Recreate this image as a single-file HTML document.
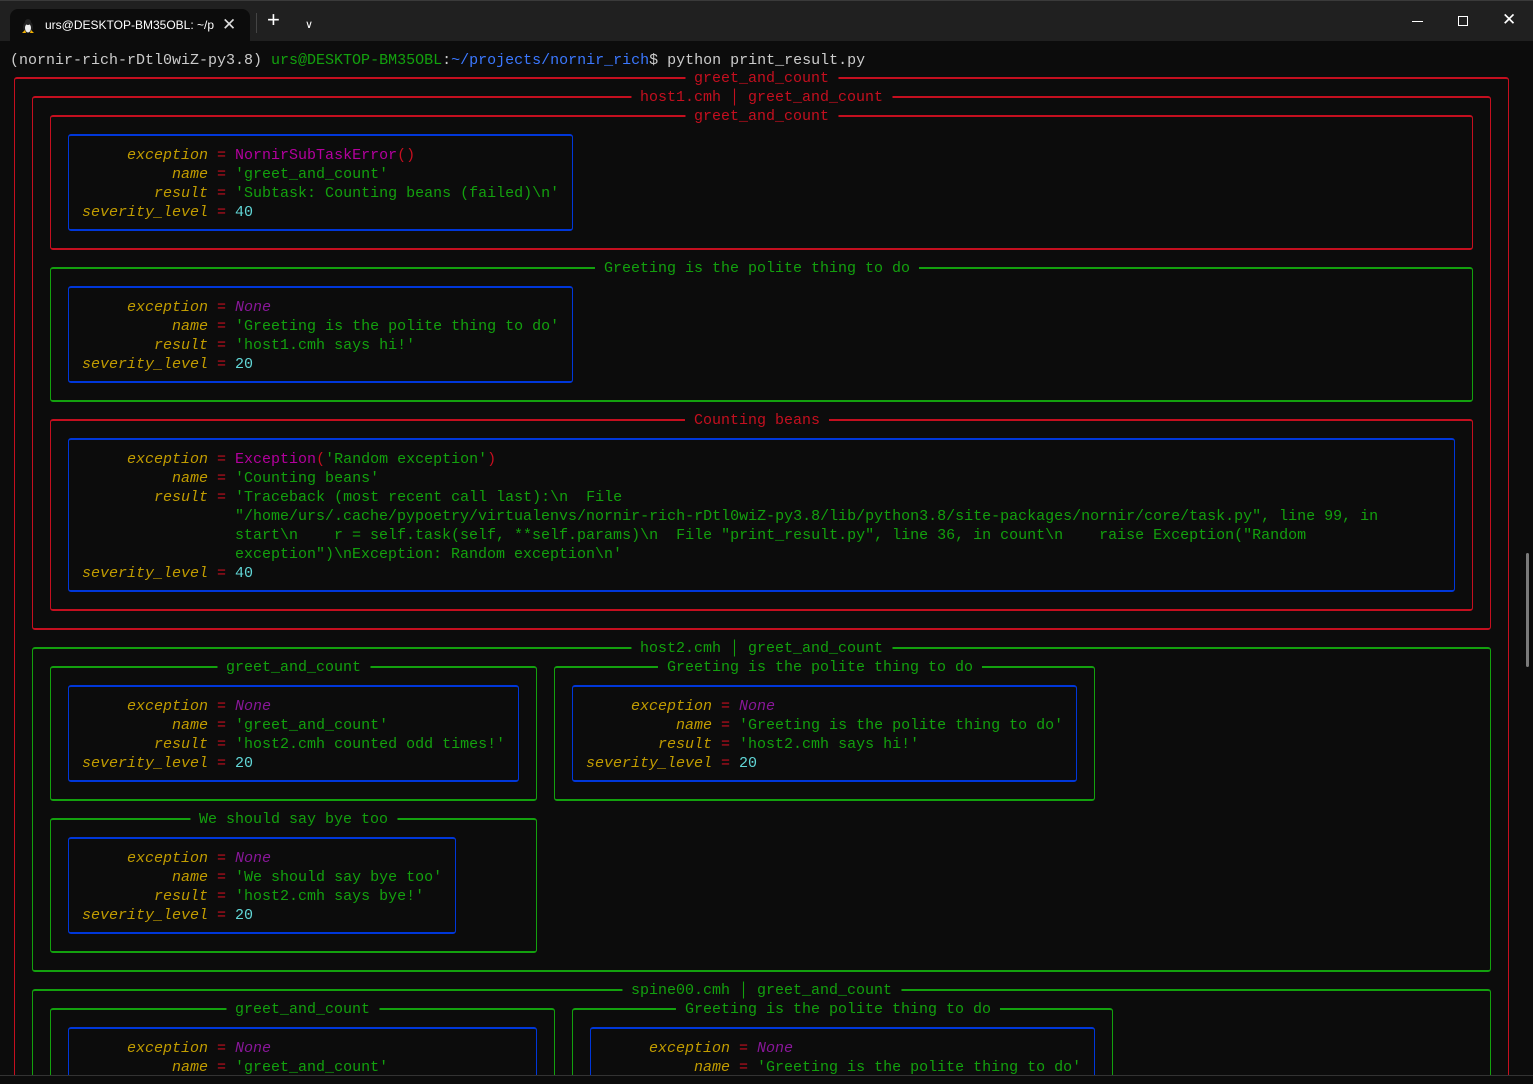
<!DOCTYPE html>
<html><head><meta charset="utf-8"><style>
*{margin:0;padding:0;box-sizing:border-box}
html,body{width:1533px;height:1084px;overflow:hidden;background:#0c0c0c}
body{position:relative;font-family:"Liberation Mono",monospace;font-size:15px;line-height:19px;color:#cccccc}
#tb{position:absolute;left:0;top:0;width:1533px;height:41px;background:#202020;border-top:1px solid #3a3a3a}
#tab{position:absolute;left:10px;top:8px;width:240px;height:33px;background:#0c0c0c;border-radius:8px 8px 0 0}
#tab .t{position:absolute;left:35px;top:9px;font:12px "Liberation Sans",sans-serif;color:#fff}
#tab .x{position:absolute;left:212px;top:6px;font:17px "Liberation Sans",sans-serif;color:#ddd}
.w{position:absolute;color:#fff;font-family:"Liberation Sans",sans-serif}
#term{position:absolute;left:0;top:41px;width:1533px;height:1034px;overflow:hidden}
#area{position:absolute;left:0;top:-40px;width:1533px;height:1075px;overflow:hidden}
.l{position:absolute;white-space:pre}
.b{position:absolute;border-style:solid;border-width:2px 1px;border-radius:3px}
.r{border-color:#c50f1f;color:#c50f1f}
.g{border-color:#13a10e;color:#13a10e}
.u{border-color:#0037da}
.tt{position:absolute;top:-10px;left:50%;transform:translateX(-50%);background:#0c0c0c;white-space:pre}
.tt.ev{margin-left:-4.5px}
.k{color:#c19c00;font-style:italic}
.e{color:#c50f1f}
.n{color:#881798;font-style:italic}
.s{color:#13a10e}
.d{color:#61d6d6}
.m{color:#b4009e}
</style></head><body>
<div id="tb">
 <div id="tab">
  <svg style="position:absolute;left:11px;top:9px" width="14" height="16" viewBox="0 0 14 16"><ellipse cx="7" cy="9" rx="5" ry="6" fill="#222"/><ellipse cx="7" cy="10" rx="3" ry="4.5" fill="#eee"/><circle cx="7" cy="4" r="3" fill="#222"/><path d="M1 15h4l-1-3zM13 15H9l1-3z" fill="#f0b000"/></svg>
  <span class="t">urs@DESKTOP-BM35OBL: ~/p</span><span class="x">✕</span>
 </div>
 <span class="w" style="left:267px;top:9px;font-size:22px">+</span>
 <div style="position:absolute;left:256px;top:12px;width:1px;height:20px;background:#444"></div>
 <span class="w" style="left:305px;top:15px;font-size:11px">&#8744;</span>
 <div style="position:absolute;left:1412px;top:20px;width:11px;height:1px;background:#fff"></div>
 <div style="position:absolute;left:1458px;top:15px;width:10px;height:10px;border:1px solid #fff"></div>
 <span class="w" style="left:1502px;top:9px;font-size:17px">✕</span>
</div>
<div id="term"><div id="area">
<div class="l" style="left:10px;top:50px">(nornir-rich-rDtl0wiZ-py3.8) <span style="color:#13a10e">urs@DESKTOP-BM35OBL</span>:<span style="color:#3b78ff">~/projects/nornir_rich</span>$ python print_result.py</div>

<div class="b r" style="left:14px;top:76px;width:1495px;height:1100px"><span class="tt"> greet_and_count </span></div>
<div class="b r" style="left:32px;top:95px;width:1459px;height:534px"><span class="tt"> host1.cmh │ greet_and_count </span></div>
<div class="b r" style="left:50px;top:114px;width:1423px;height:135px"><span class="tt"> greet_and_count </span></div>
<div class="b u" style="left:68px;top:133px;width:505px;height:97px"></div>
<div class="b g" style="left:50px;top:266px;width:1423px;height:135px"><span class="tt ev"> Greeting is the polite thing to do </span></div>
<div class="b u" style="left:68px;top:285px;width:505px;height:97px"></div>
<div class="b r" style="left:50px;top:418px;width:1423px;height:192px"><span class="tt ev"> Counting beans </span></div>
<div class="b u" style="left:68px;top:437px;width:1387px;height:154px"></div>

<div class="b g" style="left:32px;top:646px;width:1459px;height:325px"><span class="tt"> host2.cmh │ greet_and_count </span></div>
<div class="b g" style="left:50px;top:665px;width:487px;height:135px"><span class="tt"> greet_and_count </span></div>
<div class="b u" style="left:68px;top:684px;width:451px;height:97px"></div>
<div class="b g" style="left:554px;top:665px;width:541px;height:135px"><span class="tt ev"> Greeting is the polite thing to do </span></div>
<div class="b u" style="left:572px;top:684px;width:505px;height:97px"></div>
<div class="b g" style="left:50px;top:817px;width:487px;height:135px"><span class="tt"> We should say bye too </span></div>
<div class="b u" style="left:68px;top:836px;width:388px;height:97px"></div>

<div class="b g" style="left:32px;top:988px;width:1459px;height:200px"><span class="tt"> spine00.cmh │ greet_and_count </span></div>
<div class="b g" style="left:50px;top:1007px;width:505px;height:200px"><span class="tt"> greet_and_count </span></div>
<div class="b u" style="left:68px;top:1026px;width:469px;height:200px"></div>
<div class="b g" style="left:572px;top:1007px;width:541px;height:200px"><span class="tt ev"> Greeting is the polite thing to do </span></div>
<div class="b u" style="left:590px;top:1026px;width:505px;height:200px"></div>

<div class="l" style="left:82px;top:145px"><span class="k">     exception</span><span class="e"> = </span><span class="m">NornirSubTaskError</span><span class="e">()</span></div>
<div class="l" style="left:82px;top:164px"><span class="k">          name</span><span class="e"> = </span><span class="s">'greet_and_count'</span></div>
<div class="l" style="left:82px;top:183px"><span class="k">        result</span><span class="e"> = </span><span class="s">'Subtask: Counting beans (failed)\n'</span></div>
<div class="l" style="left:82px;top:202px"><span class="k">severity_level</span><span class="e"> = </span><span class="d">40</span></div>

<div class="l" style="left:82px;top:297px"><span class="k">     exception</span><span class="e"> = </span><span class="n">None</span></div>
<div class="l" style="left:82px;top:316px"><span class="k">          name</span><span class="e"> = </span><span class="s">'Greeting is the polite thing to do'</span></div>
<div class="l" style="left:82px;top:335px"><span class="k">        result</span><span class="e"> = </span><span class="s">'host1.cmh says hi!'</span></div>
<div class="l" style="left:82px;top:354px"><span class="k">severity_level</span><span class="e"> = </span><span class="d">20</span></div>

<div class="l" style="left:82px;top:449px"><span class="k">     exception</span><span class="e"> = </span><span class="m">Exception</span><span class="e">(</span><span class="s">'Random exception'</span><span class="e">)</span></div>
<div class="l" style="left:82px;top:468px"><span class="k">          name</span><span class="e"> = </span><span class="s">'Counting beans'</span></div>
<div class="l" style="left:82px;top:487px"><span class="k">        result</span><span class="e"> = </span><span class="s">'Traceback (most recent call last):\n  File</span></div>
<div class="l s" style="left:235px;top:506px">"/home/urs/.cache/pypoetry/virtualenvs/nornir-rich-rDtl0wiZ-py3.8/lib/python3.8/site-packages/nornir/core/task.py", line 99, in</div>
<div class="l s" style="left:235px;top:525px">start\n    r = self.task(self, **self.params)\n  File "print_result.py", line 36, in count\n    raise Exception("Random</div>
<div class="l s" style="left:235px;top:544px">exception")\nException: Random exception\n'</div>
<div class="l" style="left:82px;top:563px"><span class="k">severity_level</span><span class="e"> = </span><span class="d">40</span></div>

<div class="l" style="left:82px;top:696px"><span class="k">     exception</span><span class="e"> = </span><span class="n">None</span></div>
<div class="l" style="left:82px;top:715px"><span class="k">          name</span><span class="e"> = </span><span class="s">'greet_and_count'</span></div>
<div class="l" style="left:82px;top:734px"><span class="k">        result</span><span class="e"> = </span><span class="s">'host2.cmh counted odd times!'</span></div>
<div class="l" style="left:82px;top:753px"><span class="k">severity_level</span><span class="e"> = </span><span class="d">20</span></div>

<div class="l" style="left:586px;top:696px"><span class="k">     exception</span><span class="e"> = </span><span class="n">None</span></div>
<div class="l" style="left:586px;top:715px"><span class="k">          name</span><span class="e"> = </span><span class="s">'Greeting is the polite thing to do'</span></div>
<div class="l" style="left:586px;top:734px"><span class="k">        result</span><span class="e"> = </span><span class="s">'host2.cmh says hi!'</span></div>
<div class="l" style="left:586px;top:753px"><span class="k">severity_level</span><span class="e"> = </span><span class="d">20</span></div>

<div class="l" style="left:82px;top:848px"><span class="k">     exception</span><span class="e"> = </span><span class="n">None</span></div>
<div class="l" style="left:82px;top:867px"><span class="k">          name</span><span class="e"> = </span><span class="s">'We should say bye too'</span></div>
<div class="l" style="left:82px;top:886px"><span class="k">        result</span><span class="e"> = </span><span class="s">'host2.cmh says bye!'</span></div>
<div class="l" style="left:82px;top:905px"><span class="k">severity_level</span><span class="e"> = </span><span class="d">20</span></div>

<div class="l" style="left:82px;top:1038px"><span class="k">     exception</span><span class="e"> = </span><span class="n">None</span></div>
<div class="l" style="left:82px;top:1057px"><span class="k">          name</span><span class="e"> = </span><span class="s">'greet_and_count'</span></div>
<div class="l" style="left:604px;top:1038px"><span class="k">     exception</span><span class="e"> = </span><span class="n">None</span></div>
<div class="l" style="left:604px;top:1057px"><span class="k">          name</span><span class="e"> = </span><span class="s">'Greeting is the polite thing to do'</span></div>
</div></div>
<div style="position:absolute;left:1526px;top:553px;width:3px;height:114px;background:#7a7a7a;border-radius:2px"></div>
<div style="position:absolute;left:0;top:1075px;width:1533px;height:9px;background:#0c0c0c;border-top:1px solid #333"></div>
</body></html>
